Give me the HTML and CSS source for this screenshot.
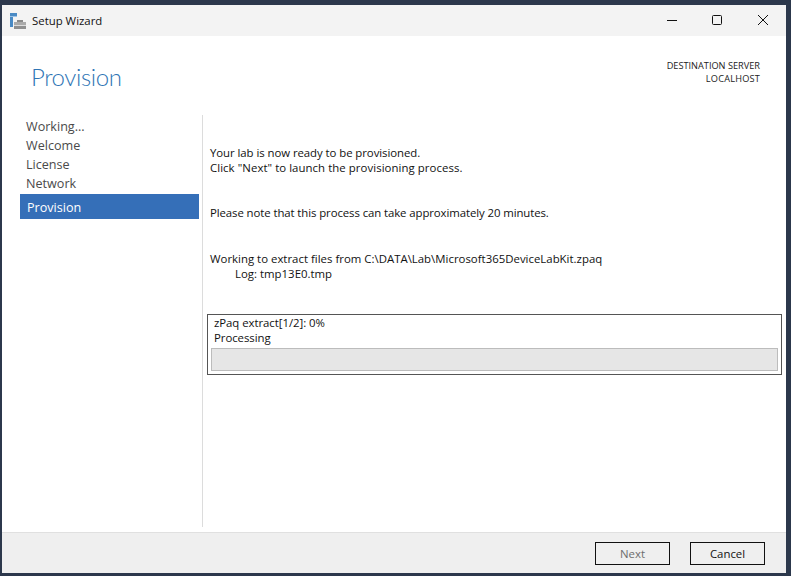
FILE: index.html
```html
<!DOCTYPE html>
<html lang="en">
<head>
<meta charset="utf-8">
<title>Setup Wizard</title>
<link rel="stylesheet" href="styles.css">
</head>
<body>
<div class="window">
  <header class="titlebar">
    <svg class="app-icon" width="17" height="17" viewBox="0 0 17 17">
      <rect x="0" y="0" width="7" height="3" fill="#4a8ac4"/>
      <rect x="0" y="3" width="7" height="1" fill="#9cc3e6"/>
      <rect x="0" y="4" width="3" height="10" fill="#4a8ac4"/>
      <rect x="7" y="7" width="6" height="2" fill="#8a8a8a"/>
      <rect x="4" y="9" width="12" height="3" fill="#a9a9a9"/>
      <rect x="4" y="12" width="12" height="1" fill="#dcdcdc"/>
      <rect x="4" y="13" width="12" height="3" fill="#8f8f8f"/>
    </svg>
    <span class="app-title">Setup Wizard</span>
    <div class="controls">
      <svg width="12" height="12" viewBox="0 0 12 12"><path d="M2 5.5h10" stroke="#111" fill="none"/></svg>
      <svg width="12" height="12" viewBox="0 0 12 12"><rect x="1.5" y="0.5" width="9" height="9" rx="1" stroke="#111" fill="none"/></svg>
      <svg width="12" height="12" viewBox="0 0 12 12"><path d="M1 0l10 10M11 0L1 10" stroke="#111" fill="none"/></svg>
    </div>
  </header>
  <div class="heading">
    <h1>Provision</h1>
    <div class="server">DESTINATION SERVER<br><span class="host">LOCALHOST</span></div>
  </div>
  <div class="body">
    <nav class="nav">
      <div class="nav-item">Working...</div>
      <div class="nav-item">Welcome</div>
      <div class="nav-item">License</div>
      <div class="nav-item">Network</div>
      <div class="nav-item active">Provision</div>
    </nav>
    <main class="content">
      <p class="msg first"><span class="tight">Your lab is now ready to be provisioned.</span><br><span class="loose">Click "Next" to launch the provisioning process.</span></p>
      <p class="msg note">Please note that this process can take approximately 20 minutes.</p>
      <p class="msg work">Working to extract files from C:\DATA\Lab\Microsoft365DeviceLabKit.zpaq<br><span class="log">Log: tmp13E0.tmp</span></p>
      <section class="progress">
        <div>zPaq extract[1/2]: 0%</div>
        <div>Processing</div>
        <div class="bar"></div>
      </section>
    </main>
  </div>
  <footer class="footer">
    <button class="btn disabled" type="button">Next</button>
    <button class="btn" type="button">Cancel</button>
  </footer>
</div>
</body>
</html>
```
FILE: styles.css
```css
* { box-sizing: border-box; }
html, body { margin: 0; height: 100%; }
body {
  background: #2c384c;
  padding: 5px 5px 3px 2px;
  font-family: "Open Sans", "Noto Sans", sans-serif;
  font-size: 11.4px;
  line-height: 15px;
  color: #111;
  overflow: hidden;
}
.window {
  width: 784px;
  height: 568px;
  background: #fff;
  display: flex;
  flex-direction: column;
}
.titlebar {
  height: 31px;
  background: #f3f3f3;
  display: flex;
  align-items: center;
  padding-left: 8px;
  flex: none;
}
.app-icon { margin-right: 5px; margin-top: 2px; }
.app-title { font-size: 11.4px; color: #111; }
.controls {
  margin-left: auto;
  display: flex;
  gap: 34px;
  padding-right: 17px;
  align-items: center;
}
.heading {
  height: 79px;
  flex: none;
  display: flex;
  justify-content: space-between;
  padding: 23px 26px 0 29px;
}
h1 {
  margin: 0;
  font-family: Lato, "Open Sans", sans-serif;
  font-size: 24px;
  letter-spacing: -0.4px;
  line-height: 36px;
  font-weight: 300;
  color: #2f75b5;
}
.server {
  font-size: 9.2px;
  line-height: 13px;
  text-align: right;
  color: #222;
}
.host { letter-spacing: 0.2px; }
.body {
  flex: 1;
  display: flex;
  min-height: 0;
}
.nav {
  width: 182px;
  margin-left: 18px;
  padding-top: 2px;
  flex: none;
  font-size: 12.6px;
  color: #4a4a4a;
}
.nav-item {
  height: 19px;
  line-height: 19px;
  padding-left: 6px;
}
.nav-item.active {
  height: 25px;
  line-height: 27px;
  margin-top: 1px;
  margin-right: 3px;
  padding-left: 7px;
  background: #356fb8;
  color: #fff;
}
.content {
  flex: 1;
  margin-bottom: 5px;
  border-left: 1px solid #dcdcdc;
  padding-left: 4px;
}
.msg { margin: 0 0 0 3px; }
.msg.first { margin-top: 30px; }
.tight { letter-spacing: -0.06px; }
.loose { letter-spacing: 0.06px; }
.msg.note { margin-top: 30px; letter-spacing: -0.09px; }
.msg.work { margin-top: 31px; letter-spacing: 0.01px; }
.log { margin-left: 25px; }
.progress {
  width: 575px;
  height: 61px;
  margin-top: 33px;
  border: 1px solid #555;
  padding: 0 3px;
}
.progress > div:not(.bar) { padding-left: 3px; letter-spacing: -0.05px; }
.bar {
  height: 23px;
  margin-top: 3px;
  background: #e6e6e6;
  border: 1px solid #bcbcbc;
}
.footer {
  height: 41px;
  flex: none;
  background: #efefef;
  border-top: 1px solid #e0e0e0;
  display: flex;
  justify-content: flex-end;
  gap: 20px;
  padding: 9px 21px 0 0;
}
.btn {
  width: 75px;
  height: 23px;
  padding: 0;
  background: #efefef;
  border: 1px solid #111;
  font: inherit;
  color: #111;
}
.btn.disabled { color: #6d6d6d; }
```
